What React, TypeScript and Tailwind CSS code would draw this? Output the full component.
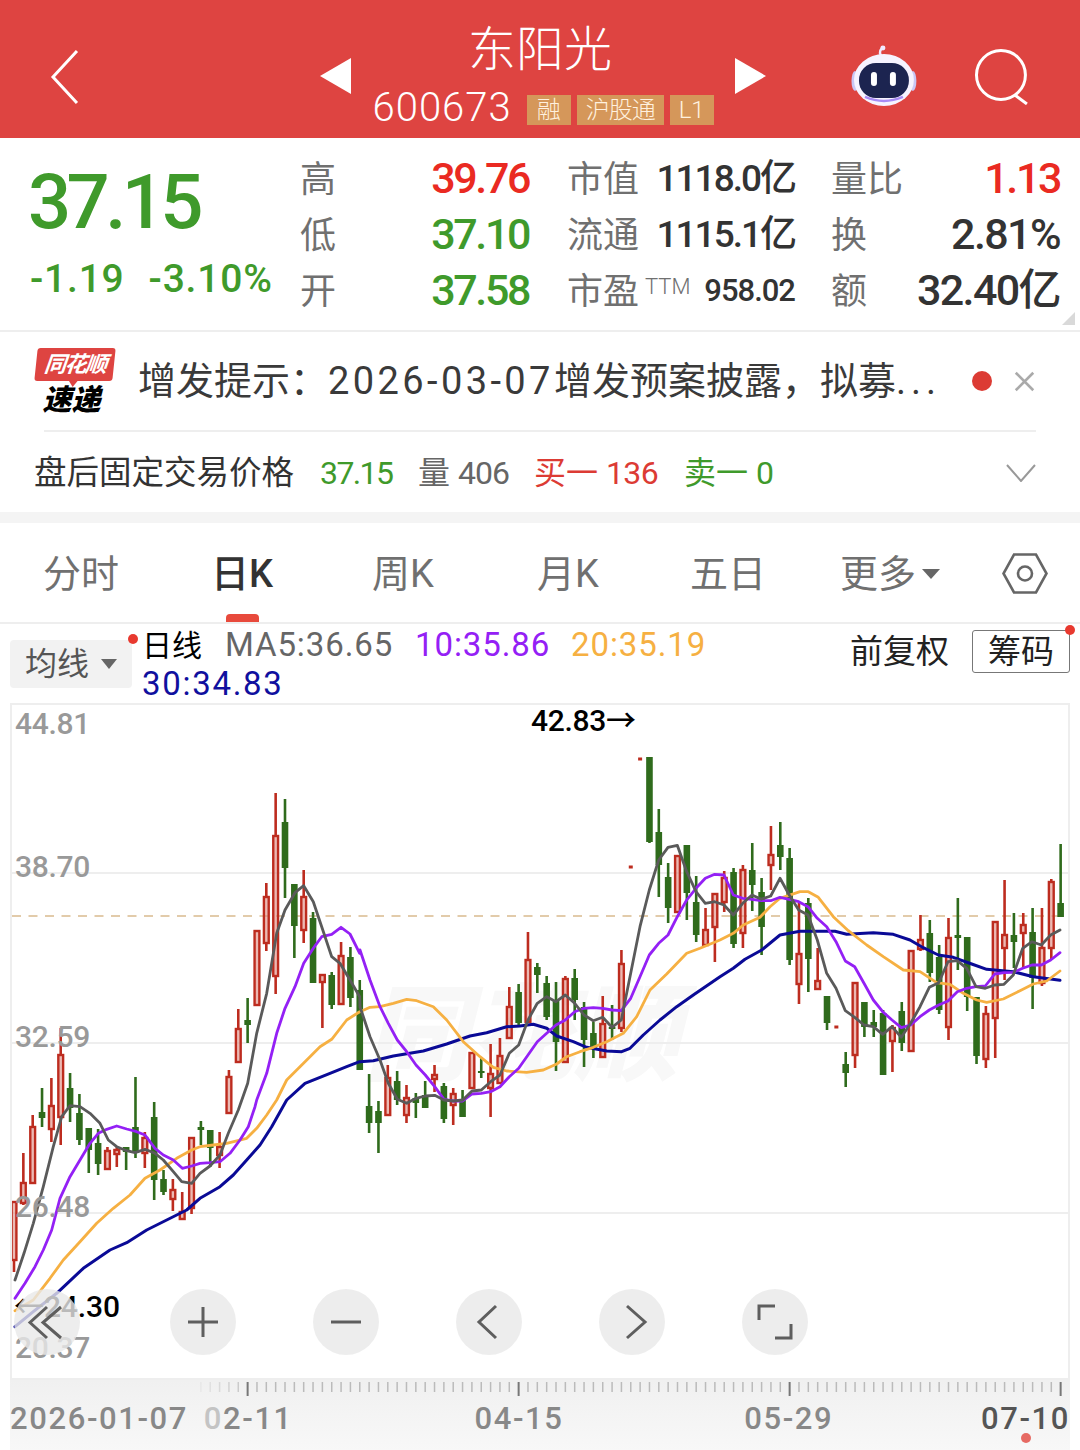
// hi, bodyTop, bodyBottom, lo, 0 = red hollow / 1 = green solid (page pixels)
const CANDLES: number[][] = [
  [1202,1202,1260,1272,0],[1153,1183,1203,1205,0],[1115,1127,1183,1183,0],[1088,1112,1118,1127,1],[1078,1106,1129,1142,0],
  [1028,1055,1117,1145,0],[1073,1088,1108,1122,1],[1094,1113,1140,1145,1],[1128,1128,1150,1173,1],[1129,1143,1164,1175,1],
  [1147,1151,1169,1170,0],[1147,1150,1154,1167,0],[1147,1147,1152,1170,1],[1077,1127,1152,1158,1],[1132,1138,1153,1168,0],
  [1102,1117,1180,1200,1],[1170,1179,1192,1195,1],[1179,1190,1199,1211,0],[1192,1212,1219,1219,0],[1138,1138,1208,1214,0],
  [1121,1127,1130,1145,1],[1130,1130,1148,1167,1],[1132,1147,1155,1168,0],[1070,1077,1113,1113,0],[1009,1029,1062,1063,0],
  [998,1020,1025,1043,1],[931,931,1005,1005,0],[883,897,943,951,0],[793,836,976,994,0],[799,822,868,898,1],
  [884,884,926,958,1],[870,897,930,943,0],[912,918,983,983,1],[975,975,982,1028,0],[972,975,1005,1009,1],
  [942,956,1004,1004,0],[947,957,998,1007,1],[980,990,1070,1070,1],[1074,1106,1123,1133,1],[1101,1111,1123,1153,1],
  [1065,1078,1115,1115,0],[1071,1081,1100,1105,1],[1085,1098,1115,1123,0],[1093,1098,1103,1118,1],[1081,1095,1108,1108,1],
  [1065,1075,1079,1092,0],[1083,1086,1119,1123,1],[1088,1094,1105,1125,0],[1090,1100,1117,1117,1],[1053,1053,1088,1088,0],
  [1058,1071,1073,1078,1],[1044,1074,1088,1117,0],[1038,1056,1083,1083,0],[987,1007,1038,1039,0],[984,992,1023,1025,1],
  [932,960,1022,1022,0],[963,967,975,993,1],[976,983,1017,1020,1],[982,1000,1042,1071,1],[976,979,1062,1062,0],
  [969,978,1000,1020,1],[1002,1007,1040,1067,1],[1022,1033,1048,1058,1],[996,1024,1057,1057,0],[1005,1027,1029,1040,1],
  [950,964,1028,1032,0],[866,866,868,868,0],[758,758,760,760,0],[757,757,842,843,1],[809,832,865,897,1],
  [863,877,908,923,1],[855,856,912,912,0],[845,845,893,920,1],[876,902,935,942,1],[908,930,945,945,0],
  [893,894,927,962,0],[871,878,902,912,0],[868,872,944,948,1],[865,870,933,948,0],[843,870,885,911,1],
  [878,892,927,955,1],[826,855,865,890,0],[822,845,857,870,1],[848,858,960,965,1],[903,954,984,1004,0],
  [898,903,959,992,1],[948,981,989,989,0],[996,996,1023,1030,1],[985,1026,1028,1070,0],[1052,1064,1073,1087,1],
  [983,983,1055,1068,0],[1002,1002,1027,1037,1],[1010,1022,1027,1037,1],[1010,1013,1075,1075,1],[1025,1028,1041,1072,0],
  [1002,1011,1043,1051,1],[951,951,1051,1051,0],[915,940,949,951,0],[920,933,973,982,1],[945,957,1010,1014,1],
  [918,938,1027,1040,0],[898,935,938,970,1],[937,937,997,1011,1],[997,997,1056,1064,1],[1006,1014,1059,1068,0],
  [922,922,1018,1058,0],[880,935,948,980,0],[913,935,942,968,1],[913,925,933,968,0],[908,932,978,1009,1],
  [908,948,983,986,0],[879,882,948,960,0],[844,903,917,917,1],
];

// points read off the picture: [x*3, y*3] relative to an origin
const seg = (ox: number, oy: number, pts: number[]) => {
  const out: [number, number][] = [];
  for (let i = 0; i < pts.length; i += 2) out.push([ox + pts[i] / 3, oy + pts[i + 1] / 3]);
  return out;
};
const line = (parts: [number, number][][]) =>
  parts.flat().sort((a, b) => a[0] - b[0]).map((p) => `${p[0].toFixed(1)},${p[1].toFixed(1)}`).join(" ");

const MA5 = line([
  seg(0,1090,[45,570,72,490,100,400,130,290,160,170,185,80,210,47,240,50,270,70,300,100,325,150,350,170,380,182,405,188,435,178,465,190,490,210,520,245,545,275,575,280,600,250,630,228,660,195,685,130,715,60]),
  seg(0,700,[743,1150,770,1000,800,880,830,700,855,630,885,578,911,557,940,605,965,680,995,770,1020,790,1050,840,1079,890]),
  seg(360,740,[0,800,30,890,60,960,85,1030,112,1078,140,1090,168,1075,196,1068,224,1066,252,1080,280,1083,308,1080,336,1053,364,1050,392,1025,420,1005,448,940,476,915,504,840,532,790,560,770,588,785,616,765,644,790,672,825,700,842,728,832,756,862,784,840,812,700,840,560,868,450,896,360,924,322,952,316,980,395,1008,455,1036,490,1064,485]),
  seg(720,800,[12,315,40,345,68,310,96,285,124,298,152,288,180,235,208,285,236,330,264,345,292,420,320,520,348,565,376,632,404,652,432,675,460,680,488,703,516,680,544,712,572,670,600,620,628,562,656,548,684,485,712,482,740,505,768,560,796,565,824,555,852,553,880,525,908,445,936,425,964,435,992,405,1020,390]),
]);
const MA10 = line([
  seg(0,1090,[45,625,75,580,105,530,130,480,155,420,180,325,210,260,240,210,270,160,295,130,320,118,350,108,380,117,410,125,435,135,465,175,490,195,520,210,547,235,575,228,600,220,630,218,660,215,690,190,720,150,745,110,765,50]),
  seg(0,700,[770,1200,800,1120,830,1000,855,925,885,860,911,790,940,745,965,710,995,703,1023,682,1050,702,1079,760]),
  seg(360,740,[0,630,30,720,60,800,85,850,112,900,140,935,168,975,196,1005,224,1040,252,1078,280,1083,308,1083,336,1062,364,1060,392,1055,420,1040,448,1010,476,985,504,945,532,905,560,880,588,855,616,840,644,815,672,805,700,803,728,805,756,810,784,812,812,775,840,710,868,645,896,610,924,585,952,530,980,480,1008,445,1036,415,1064,403]),
  seg(720,800,[12,225,40,285,68,295,96,298,124,302,152,302,180,292,208,298,236,305,264,320,292,355,320,380,348,425,376,483,404,500,432,550,460,600,488,635,516,660,544,683,572,675,600,650,628,630,656,615,684,603,712,575,740,565,768,560,796,558,824,522,852,518,880,517,908,505,936,495,964,495,992,480,1020,458]),
]);
const MA20 = line([
  seg(0,1090,[45,662,100,630,150,565,190,510,240,455,290,400,340,355,390,315,435,265,480,240,530,205,575,180,600,170,640,165,680,160,740,145,770,115,800,75]),
  seg(0,700,[830,1200,860,1140,915,1085,960,1040,995,1018,1040,960,1079,935]),
  seg(360,740,[0,815,30,802,60,800,100,790,140,778,170,782,220,800,260,840,310,905,360,950,400,982,440,993,500,997,550,990,590,972,620,950,660,935,700,922,740,905,790,880,830,830,870,750,920,702,980,640,1020,625,1080,600]),
  seg(720,800,[40,400,70,375,120,352,150,320,180,295,240,275,265,275,295,292,340,350,385,392,440,435,490,470,550,510,600,515,650,548,690,553,730,580,770,600,800,607,850,597,900,572,940,552,980,543,1020,513]),
]);
const MA30 = line([
  seg(0,1090,[45,710,100,665,170,610,250,535,330,480,380,458,440,420,500,390,560,360,600,325,660,290,700,255,740,210,780,165,815,110]),
  seg(0,700,[860,1200,915,1150,990,1120,1040,1100,1079,1085]),
  seg(360,740,[0,965,40,962,100,948,190,933,260,912,330,888,380,878,440,860,480,858,520,853,560,865,590,888,640,905,680,922,740,933,785,935,810,925,850,885,900,840,950,800,1000,765,1080,710]),
  seg(720,800,[40,505,75,478,125,450,180,405,240,394,345,394,380,403,460,398,520,403,570,420,610,443,655,465,700,472,755,492,800,508,880,515,940,530,1020,541]),
]);

const cx = (i: number) => 14 + i * 9.345;

function Chart() {
  return (
    <svg viewBox="12 705 1056 673" className="block h-[673px] w-[1056px]">
      {[873, 1043, 1213].map((y) => (
        <line key={y} x1="12" x2="1068" y1={y} y2={y} stroke="#eeeeee" strokeWidth="2" />
      ))}
      <line x1="12" x2="1068" y1="916" y2="916" stroke="#d9bb8e" strokeWidth="1.5" strokeDasharray="9 7.5" />
      {CANDLES.map((c, i) => {
        const [hi, top, bot, lo, green] = c;
        const x = cx(i);
        if (green) {
          return (
            <g key={i}>
              <line x1={x} x2={x} y1={hi} y2={lo} stroke="#2f6b1c" strokeWidth="2.6" />
              <rect x={x - 3.3} y={top} width="6.6" height={Math.max(bot - top, 2)} fill="#2f6b1c" />
            </g>
          );
        }
        // limit-up days are drawn as a lone tick
        if (bot - top <= 2) {
          return <rect key={i} x={x - 2} y={top - 0.5} width="4" height="3" fill="#bd2c1f" />;
        }
        return (
          <g key={i}>
            <line x1={x} x2={x} y1={hi} y2={top} stroke="#bd2c1f" strokeWidth="2.6" />
            <line x1={x} x2={x} y1={bot} y2={lo} stroke="#bd2c1f" strokeWidth="2.6" />
            <rect x={x - 2.4} y={top} width="4.8" height={bot - top} fill="#e08a80" fillOpacity="0.6" stroke="#bd2c1f" strokeWidth="2.4" />
          </g>
        );
      })}
      <polyline points={MA30} fill="none" stroke="#0a0a96" strokeWidth="3" strokeLinejoin="round" strokeLinecap="round" />
      <polyline points={MA20} fill="none" stroke="#f6b042" strokeWidth="2.8" strokeLinejoin="round" strokeLinecap="round" />
      <polyline points={MA10} fill="none" stroke="#9420f5" strokeWidth="2.8" strokeLinejoin="round" strokeLinecap="round" />
      <polyline points={MA5} fill="none" stroke="#5a5a5a" strokeWidth="2.8" strokeLinejoin="round" strokeLinecap="round" />
    </svg>
  );
}

function Stat({ label, value, cls }: { label: React.ReactNode; value: React.ReactNode; cls: string }) {
  return (
    <div className="flex w-full items-center justify-between">
      <span className="mt-[3px] text-[36px] leading-none font-normal text-[#707070]">{label}</span>
      <span className={`leading-none font-medium ${cls}`}>{value}</span>
    </div>
  );
}

function Round({ children }: { children: React.ReactNode }) {
  return (
    <div className="flex h-[66px] w-[66px] items-center justify-center rounded-full bg-[#e8e8e8]/80">
      <svg viewBox="0 0 40 40" className="h-[40px] w-[40px]" fill="none" stroke="#5e5e5e" strokeWidth="3">
        {children}
      </svg>
    </div>
  );
}

export default function App() {
  return (
    <div className="h-[1450px] w-[1080px] overflow-hidden bg-white font-['Roboto','Noto_Sans_CJK_SC',sans-serif]">
      {/* red title bar */}
      <header className="relative flex h-[138px] items-center bg-[#de4441] pr-[50px] pl-[50px] text-white">
        <svg viewBox="0 0 30 56" className="mt-[16px] h-[56px] w-[30px]" fill="none" stroke="#ffffff" strokeWidth="3">
          <path d="M27 2 L3 28 L27 54" />
        </svg>
        <div className="ml-[240px] flex w-[447px] items-center justify-between">
          <span className="mt-[13px] h-0 w-0 border-y-[18px] border-r-[31px] border-y-transparent border-r-white" />
          <div className="flex flex-col items-center">
            <span className="mt-[9px] mr-[6px] text-[48px] leading-[60px] font-light">东阳光</span>
            <div className="mt-[9px] flex items-center">
              <span className="text-[40px] leading-[38px] font-light tracking-[1px]">600673</span>
              <div className="mt-[4px] ml-[15px] flex gap-[6px] text-[24px] leading-[30px] font-light text-[#fff1df]">
                <span className="w-[44px] bg-[#d5975a] text-center">融</span>
                <span className="w-[87px] bg-[#d5975a] text-center tracking-[-1px]">沪股通</span>
                <span className="w-[44px] bg-[#d5975a] text-center">L1</span>
              </div>
            </div>
          </div>
          <span className="mt-[13px] h-0 w-0 border-y-[18px] border-l-[31px] border-y-transparent border-l-white" />
        </div>
        <svg viewBox="0 0 66 62" className="mt-[14px] ml-[85px] h-[62px] w-[66px]" fill="none">
          <path d="M33 14 C28 10 28 6 31 3" stroke="#f1e9ff" strokeWidth="2.5" />
          <circle cx="32" cy="3" r="2.5" fill="#f1e9ff" />
          <ellipse cx="4" cy="36" rx="3.5" ry="10" fill="#c9c6f5" />
          <ellipse cx="62" cy="36" rx="3.5" ry="10" fill="#c9c6f5" />
          <ellipse cx="33" cy="35" rx="30" ry="26" fill="#f6f3ff" />
          <rect x="8" y="18" width="50" height="35" rx="17" fill="#1c2450" />
          <path d="M14 52 Q33 60 52 52" stroke="#a88bf5" strokeWidth="2.5" />
          <rect x="20" y="27" width="6" height="14" rx="3" fill="#ffffff" />
          <rect x="39" y="27" width="6" height="14" rx="3" fill="#ffffff" />
        </svg>
        <svg viewBox="0 0 56 56" className="mt-[16px] ml-[57px] h-[56px] w-[56px]" fill="none" stroke="#ffffff" strokeWidth="3">
          <circle cx="27" cy="26" r="24.5" />
          <path d="M41 46 L53 55" />
        </svg>
      </header>

      {/* quote */}
      <section className="relative flex h-[194px] border-b-2 border-[#eeeeee]">
        <div className="w-[300px] pt-[25px] pl-[28px] text-[#3f9a2b]">
          <div className="text-[76px] leading-[78px] font-medium tracking-[-4.6px]">37.15</div>
          <div className="mt-[16px] ml-[2px] flex gap-[24px] text-[39px] leading-[44px] font-medium tracking-[0.8px]">
            <span>-1.19</span>
            <span>-3.10%</span>
          </div>
        </div>
        <div className="flex flex-1 pt-[12px]">
          <div className="grid h-[168px] w-[229px] grid-rows-3">
            <Stat label="高" value="39.76" cls="text-[43px] tracking-[-2.4px] text-[#ea2a22]" />
            <Stat label="低" value="37.10" cls="text-[43px] tracking-[-2.4px] text-[#3f9a2b]" />
            <Stat label="开" value="37.58" cls="text-[43px] tracking-[-2.4px] text-[#3f9a2b]" />
          </div>
          <div className="ml-[38px] grid h-[168px] w-[228px] grid-rows-3">
            <Stat label="市值" value="1118.0亿" cls="text-[37px] tracking-[-2px] text-[#333333]" />
            <Stat label="流通" value="1115.1亿" cls="text-[37px] tracking-[-2px] text-[#333333]" />
            <Stat
              label={<>市盈<span className="relative top-[-10px] ml-[6px] text-[22px] font-light">TTM</span></>}
              value="958.02"
              cls="text-[31px] tracking-[-1px] text-[#333333]"
            />
          </div>
          <div className="ml-[36px] grid h-[168px] w-[229px] grid-rows-3">
            <Stat label="量比" value="1.13" cls="text-[43px] tracking-[-2.4px] text-[#ea2a22]" />
            <Stat label="换" value="2.81%" cls="text-[43px] tracking-[-1.6px] text-[#333333]" />
            <Stat label="额" value="32.40亿" cls="text-[43px] tracking-[-1.6px] text-[#333333]" />
          </div>
        </div>
        <span className="absolute right-[5px] bottom-[5px] h-0 w-0 border-t-[13px] border-r-[13px] border-t-transparent border-r-[#d9d9d9]" />
      </section>

      {/* notice */}
      <section className="ml-[34px] flex h-[98px] items-center">
        <div className="mt-[2px] flex w-[81px] flex-col items-center">
          <div className="relative h-[33px] w-[78px] -skew-x-6 rounded-[3px] bg-[#de4441] text-center text-[22px] leading-[33px] font-bold tracking-[-1.5px] text-white italic">
            同花顺
            <span className="absolute bottom-[-6px] left-[34px] h-0 w-0 border-x-[5px] border-t-[7px] border-x-transparent border-t-[#de4441]" />
          </div>
          <div className="mt-[3px] mr-[6px] text-[29px] leading-[32px] font-black text-black italic">速递</div>
        </div>
        <p className="ml-[23px] w-[800px] text-[38px] leading-none font-normal whitespace-nowrap text-[#3a3a3a]">
          增发提示：<span className="tracking-[3.4px]">2026-03-07</span>增发预案披露，拟募<span className="tracking-[5px]">...</span>
        </p>
        <span className="ml-[34px] h-[20px] w-[20px] shrink-0 rounded-full bg-[#dc3b34]" />
        <svg viewBox="0 0 24 24" className="ml-[22px] h-[21px] w-[21px] shrink-0" stroke="#aaaaaa" strokeWidth="3">
          <path d="M2 2 L22 22 M22 2 L2 22" />
        </svg>
      </section>
      <div className="mr-[44px] ml-[44px] h-[2px] bg-[#eeeeee]" />

      {/* after-hours row */}
      <section className="flex h-[80px] items-center pt-[2px] pr-[44px] pl-[34px] text-[32px] leading-none font-normal">
        <span className="w-[286px] text-[32.5px] text-[#333333]">盘后固定交易价格</span>
        <span className="w-[98px] tracking-[-1.6px] text-[#3f9a2b]">37.15</span>
        <span className="w-[116px] text-[#666666]">量 <span className="tracking-[-1px]">406</span></span>
        <span className="w-[150px] text-[#dc3b34]">买一 <span className="tracking-[-0.6px]">136</span></span>
        <span className="w-[322px] text-[#3f9a2b]">卖一 <span>0</span></span>
        <svg viewBox="0 0 30 18" className="h-[18px] w-[30px]" fill="none" stroke="#999999" strokeWidth="2">
          <path d="M1 1 L15 17 L29 1" />
        </svg>
      </section>
      <div className="h-[11px] bg-[#f4f4f4]" />

      {/* period tabs */}
      <nav className="relative flex h-[101px] items-center border-b-2 border-[#eeeeee] pt-[2px] text-[38px] leading-none font-normal text-[#707070]">
        <span className="ml-[43px] w-[168px]">分时</span>
        <span className="w-[161px] font-medium text-[#333333]">日K</span>
        <span className="w-[165px]">周K</span>
        <span className="w-[153px]">月K</span>
        <span className="w-[150px]">五日</span>
        <span className="flex w-[162px] items-center">
          更多
          <span className="ml-[6px] h-0 w-0 border-x-[9px] border-t-[10px] border-x-transparent border-t-[#666666]" />
        </span>
        <svg viewBox="0 0 46 41" className="h-[41px] w-[46px]" fill="none" stroke="#666666" strokeWidth="2.6">
          <path d="M12 1.5 L34 1.5 L44.5 20.5 L34 39.5 L12 39.5 L1.5 20.5 Z" />
          <circle cx="23" cy="20.5" r="7" />
        </svg>
        <span className="absolute bottom-[0px] left-[226px] h-[8px] w-[33px] rounded-t-[4px] bg-[#e84a3c]" />
      </nav>

      {/* legend */}
      <section className="relative flex h-[79px]">
        <div className="mt-[16px] ml-[10px] flex h-[48px] w-[122px] items-center justify-center rounded-[4px] bg-[#f2f2f2] text-[32px] font-normal text-[#555555]">
          均线
          <span className="ml-[12px] h-0 w-0 border-x-[8px] border-t-[10px] border-x-transparent border-t-[#666666]" />
        </div>
        <span className="absolute top-[10px] left-[128px] h-[10px] w-[10px] rounded-full bg-[#e8392f]" />
        <div className="ml-[10px] w-[600px] pt-[2px] text-[33px] leading-[38px]">
          <div className="flex items-baseline tracking-[0.9px]">
            <span className="w-[83px] text-[30px] tracking-normal text-black">日线</span>
            <span className="w-[190px] text-[#666666]">MA5:36.65</span>
            <span className="w-[156px] text-[#9420f5]">10:35.86</span>
            <span className="text-[#f6b042]">20:35.19</span>
          </div>
          <div className="tracking-[1.7px] text-[#10109e]">30:34.83</div>
        </div>
        <span className="mt-[9px] ml-[108px] text-[33px] leading-[38px] font-normal text-[#222222]">前复权</span>
        <div className="relative mt-[6px] ml-[23px] flex h-[43px] w-[98px] items-center justify-center rounded-[3px] border border-[#777777] text-[33px] font-normal text-[#222222]">
          筹码
          <span className="absolute top-[-6px] right-[-6px] h-[10px] w-[10px] rounded-full bg-[#e8392f]" />
        </div>
      </section>

      {/* candlestick panel */}
      <section className="relative mx-[10px] h-[677px] border-2 border-[#eeeeee]">
        <span className="absolute top-[279px] left-[352px] text-[105px] leading-none font-black text-[#f8f8f8] italic">同花顺</span>
        <div className="absolute inset-0">
          <Chart />
        </div>
        <span className="absolute top-[1px] left-[3px] text-[30px] leading-[36px] font-medium tracking-[-0.3px] text-[#999999]">44.81</span>
        <span className="absolute top-[144px] left-[3px] text-[30px] leading-[36px] font-medium tracking-[-0.3px] text-[#999999]">38.70</span>
        <span className="absolute top-[314px] left-[3px] text-[30px] leading-[36px] font-medium tracking-[-0.3px] text-[#999999]">32.59</span>
        <span className="absolute top-[484px] left-[3px] text-[30px] leading-[36px] font-medium tracking-[-0.3px] text-[#999999]">26.48</span>
        <span className="absolute top-[625px] left-[3px] text-[30px] leading-[36px] font-medium tracking-[-0.3px] text-[#999999]">20.37</span>
        <span className="absolute top-[0px] left-[519px] text-[30px] leading-[32px] font-medium tracking-[-0.3px] text-black">42.83→</span>
        <span className="absolute top-[584px] left-[2px] text-[30px] leading-[36px] font-medium tracking-[-0.1px] text-black">←24.30</span>
        <div className="absolute top-[584px] left-[2px] flex">
          <Round>
            <path d="M20 5 L3 20.5 L20 36 M34 5 L16 20.5 L34 36" />
          </Round>
          <div className="ml-[90px] flex gap-[77px]">
            <Round>
              <path d="M20 5 L20 35 M5 20 L35 20" />
            </Round>
            <Round>
              <path d="M5 20 L35 20" />
            </Round>
            <Round>
              <path d="M27 4 L10 20 L27 36" />
            </Round>
            <Round>
              <path d="M15 4 L33 20 L15 36" />
            </Round>
            <Round>
              <path d="M4 18 L4 4 L20 4 M36 22 L36 36 L20 36" />
            </Round>
          </div>
        </div>
      </section>

      {/* time axis */}
      <section className="relative mx-[10px] h-[70px] bg-linear-to-b from-[#f0f0f0] to-[#f8f8f8] text-[31px] leading-[36px] font-medium tracking-[1.6px] whitespace-nowrap text-[#888888]">
        <svg viewBox="10 1380 1060 18" className="block h-[18px] w-[1060px]">
          {Array.from({ length: 113 }, (_, i) => i).filter((i) => cx(i) >= 200).map((i) => {
            const major = i === 25 || i === 54 || i === 83 || i === 112;
            const x = cx(i);
            return (
              <line
                key={i}
                x1={x}
                x2={x}
                y1={1382}
                y2={major ? 1396 : 1392}
                stroke={major ? "#777777" : "#bbbbbb"}
                strokeWidth={major ? 2 : 1.5}
                opacity={major ? 1 : Math.min(1, (x - 190) / 70)}
              />
            );
          })}
        </svg>
        <div className="mt-[3px] flex">
          <span className="w-[194px]">2026-01-07</span>
          <span className="w-[271px]"><span className="text-[#c4c4c4]">0</span>2-11</span>
          <span className="w-[270px]">04-15</span>
          <span className="w-[237px]">05-29</span>
          <span className="text-[#555555]">07-10</span>
        </div>
        <span className="absolute top-[53px] left-[1011px] h-[10px] w-[10px] rounded-full bg-[#e66a63]" />
      </section>
    </div>
  );
}
